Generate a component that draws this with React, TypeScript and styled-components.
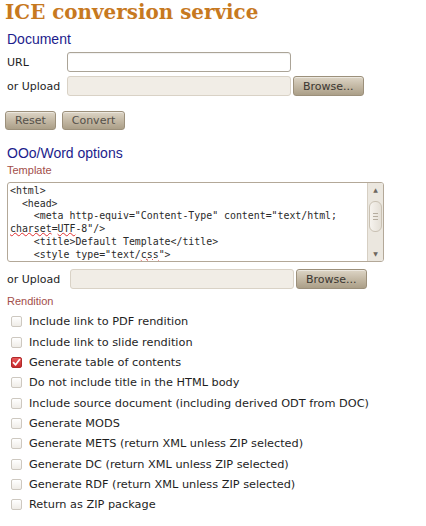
import React from 'react'
import styled, { createGlobalStyle } from 'styled-components'

const GlobalStyle = createGlobalStyle`
  html, body {
    margin: 0;
    padding: 0;
    background: #ffffff;
  }
`

const options = [
  { label: 'Include link to PDF rendition', checked: false },
  { label: 'Include link to slide rendition', checked: false },
  { label: 'Generate table of contents', checked: true },
  { label: 'Do not include title in the HTML body', checked: false },
  { label: 'Include source document (including derived ODT from DOC)', checked: false },
  { label: 'Generate MODS', checked: false },
  { label: 'Generate METS (return XML unless ZIP selected)', checked: false },
  { label: 'Generate DC (return XML unless ZIP selected)', checked: false },
  { label: 'Generate RDF (return XML unless ZIP selected)', checked: false },
  { label: 'Return as ZIP package', checked: false },
]

const App: React.FC = () => {
  return (
    <>
      <GlobalStyle />
      <StyledPage>
        <StyledTitle>ICE conversion service</StyledTitle>

        <StyledHeading>Document</StyledHeading>
        <StyledFormRow labelWidth={58}>
          <StyledLabel>URL</StyledLabel>
          <StyledInput />
        </StyledFormRow>
        <StyledFormRow labelWidth={58} style={{ marginTop: 4 }}>
          <StyledLabel>or Upload</StyledLabel>
          <StyledFileInput />
          <StyledButton>Browse...</StyledButton>
        </StyledFormRow>

        <StyledActions>
          <StyledButton muted>Reset</StyledButton>
          <StyledButton muted>Convert</StyledButton>
        </StyledActions>

        <StyledHeading spaced>OOo/Word options</StyledHeading>
        <StyledSubHeading>Template</StyledSubHeading>
        <StyledTemplateBox>
          <StyledCode>
            <div>{'<html>'}</div>
            <div>{'  <head>'}</div>
            <div>{'    <meta http-equiv="Content-Type" content="text/html;'}</div>
            <div>
              <StyledTypo>charset</StyledTypo>=<StyledTypo>UTF</StyledTypo>{'-8"/>'}
            </div>
            <div>{'    <title>Default Template</title>'}</div>
            <div>
              {'    <style type="text/'}<StyledTypo>css</StyledTypo>{'">'}
            </div>
          </StyledCode>
          <StyledScrollbar>
            <StyledArrow>▲</StyledArrow>
            <StyledThumb>
              <StyledGrip />
              <StyledGrip />
              <StyledGrip />
            </StyledThumb>
            <StyledTrack />
            <StyledArrow>▼</StyledArrow>
          </StyledScrollbar>
        </StyledTemplateBox>
        <StyledFormRow labelWidth={61} style={{ marginTop: 7 }}>
          <StyledLabel>or Upload</StyledLabel>
          <StyledFileInput />
          <StyledButton>Browse...</StyledButton>
        </StyledFormRow>

        <StyledSubHeading style={{ marginTop: 6 }}>Rendition</StyledSubHeading>
        <StyledOptions>
          {options.map((opt) => (
            <StyledOption key={opt.label}>
              <StyledCheckbox checked={opt.checked}>
                {opt.checked && (
                  <svg width="9" height="9" viewBox="0 0 9 9">
                    <path d="M1.5 4.6 L3.6 6.8 L7.6 1.6" fill="none" stroke="#ffffff" strokeWidth="1.7" strokeLinecap="round" strokeLinejoin="round" />
                  </svg>
                )}
              </StyledCheckbox>
              <StyledOptionLabel>{opt.label}</StyledOptionLabel>
            </StyledOption>
          ))}
        </StyledOptions>
      </StyledPage>
    </>
  )
}

const StyledPage = styled.div`
  padding: 0 0 0 7px;
  font-family: 'DejaVu Sans', Verdana, sans-serif;
  color: #222222;
`

const StyledTitle = styled.h1`
  margin: 0 0 0 -2px;
  font-family: 'DejaVu Serif', Georgia, serif;
  font-weight: bold;
  font-size: 19.9px;
  line-height: 24px;
  color: #c7791f;
`

const StyledHeading = styled.h2<{ spaced?: boolean }>`
  margin: ${(props) => (props.spaced ? '15px' : '7px')} 0 ${(props) => (props.spaced ? '3px' : '5px')};
  font-family: 'Liberation Sans', Arial, sans-serif;
  font-weight: normal;
  font-size: 14px;
  line-height: 16px;
  color: #1c1c8c;
`

const StyledSubHeading = styled.div`
  font-family: 'Liberation Sans', Arial, sans-serif;
  font-size: 11px;
  line-height: 13px;
  color: #a24e4a;
`

const StyledFormRow = styled.div<{ labelWidth: number }>`
  display: grid;
  grid-template-columns: ${(props) => props.labelWidth}px 224px auto;
  column-gap: 2px;
  align-items: center;
  height: 20px;
`

const StyledLabel = styled.span`
  font-size: 11px;
  color: #1e1e1e;
`

const StyledInput = styled.div`
  box-sizing: border-box;
  height: 20px;
  background: #ffffff;
  border: 1px solid #aba497;
  border-radius: 3px;
  box-shadow: inset 0 1px 1px rgba(0, 0, 0, 0.06);
`

const StyledFileInput = styled(StyledInput)`
  background: #f1ede6;
  border-color: #d9d2c6;
  box-shadow: none;
`

const StyledButton = styled.button<{ muted?: boolean }>`
  box-sizing: border-box;
  height: 20px;
  padding: 0 9px;
  font-family: 'DejaVu Sans', Verdana, sans-serif;
  font-size: 11px;
  color: ${(props) => (props.muted ? '#555049' : '#3a3631')};
  background: linear-gradient(to bottom, #ddd5c6 0%, #c4b9a5 50%, #ab9f88 100%);
  border: 1px solid #9c907b;
  border-radius: 3px;
  box-shadow: inset 0 1px 0 rgba(255, 255, 255, 0.45);
  justify-self: start;
`

const StyledActions = styled.div`
  display: flex;
  gap: 6px;
  margin: 15px 0 0 -2px;
  & > button {
    height: 19px;
  }
`

const StyledTemplateBox = styled.div`
  box-sizing: border-box;
  display: flex;
  width: 377px;
  height: 80px;
  margin-top: 5px;
  border: 1px solid #b3a898;
  border-radius: 3px;
  overflow: hidden;
  background: #ffffff;
`

const StyledCode = styled.div`
  flex: 1;
  padding: 2px 2px;
  font-family: 'DejaVu Sans Mono', monospace;
  font-size: 9.9px;
  line-height: 12.7px;
  white-space: pre;
  color: #2a2a2a;
  overflow: hidden;
`

const StyledTypo = styled.span`
  text-decoration: underline wavy #e03030;
  text-decoration-thickness: 1px;
  text-underline-offset: 0px;
`

const StyledScrollbar = styled.div`
  width: 15px;
  display: flex;
  flex-direction: column;
  align-items: center;
  background: #ebe7df;
  border-left: 1px solid #d6cfc3;
`

const StyledArrow = styled.div`
  height: 14px;
  line-height: 14px;
  font-size: 6px;
  color: #6d675e;
`

const StyledThumb = styled.div`
  box-sizing: border-box;
  width: 13px;
  height: 31px;
  margin-top: 4px;
  display: flex;
  flex-direction: column;
  justify-content: center;
  align-items: center;
  gap: 2px;
  background: linear-gradient(to right, #f6f3ee, #e4dfd6);
  border: 1px solid #c9c1b3;
  border-radius: 6px;
`

const StyledGrip = styled.div`
  width: 5px;
  height: 1px;
  background: #b5ad9f;
`

const StyledTrack = styled.div`
  flex: 1;
`

const StyledOptions = styled.div`
  margin-top: 3.6px;
`

const StyledOption = styled.div`
  display: flex;
  align-items: center;
  height: 20.33px;
`

const StyledCheckbox = styled.span<{ checked?: boolean }>`
  box-sizing: border-box;
  width: 11px;
  height: 11px;
  margin-left: 4px;
  display: flex;
  align-items: center;
  justify-content: center;
  border-radius: 2px;
  border: 1px solid ${(props) => (props.checked ? '#b02a2a' : '#cdc8c0')};
  background: ${(props) =>
    props.checked
      ? 'linear-gradient(to bottom, #e8585a, #c8282c)'
      : 'linear-gradient(to bottom, #ffffff, #efece7)'};
`

const StyledOptionLabel = styled.span`
  margin-left: 7px;
  font-size: 11.3px;
  color: #1e1e1e;
`

export default App
